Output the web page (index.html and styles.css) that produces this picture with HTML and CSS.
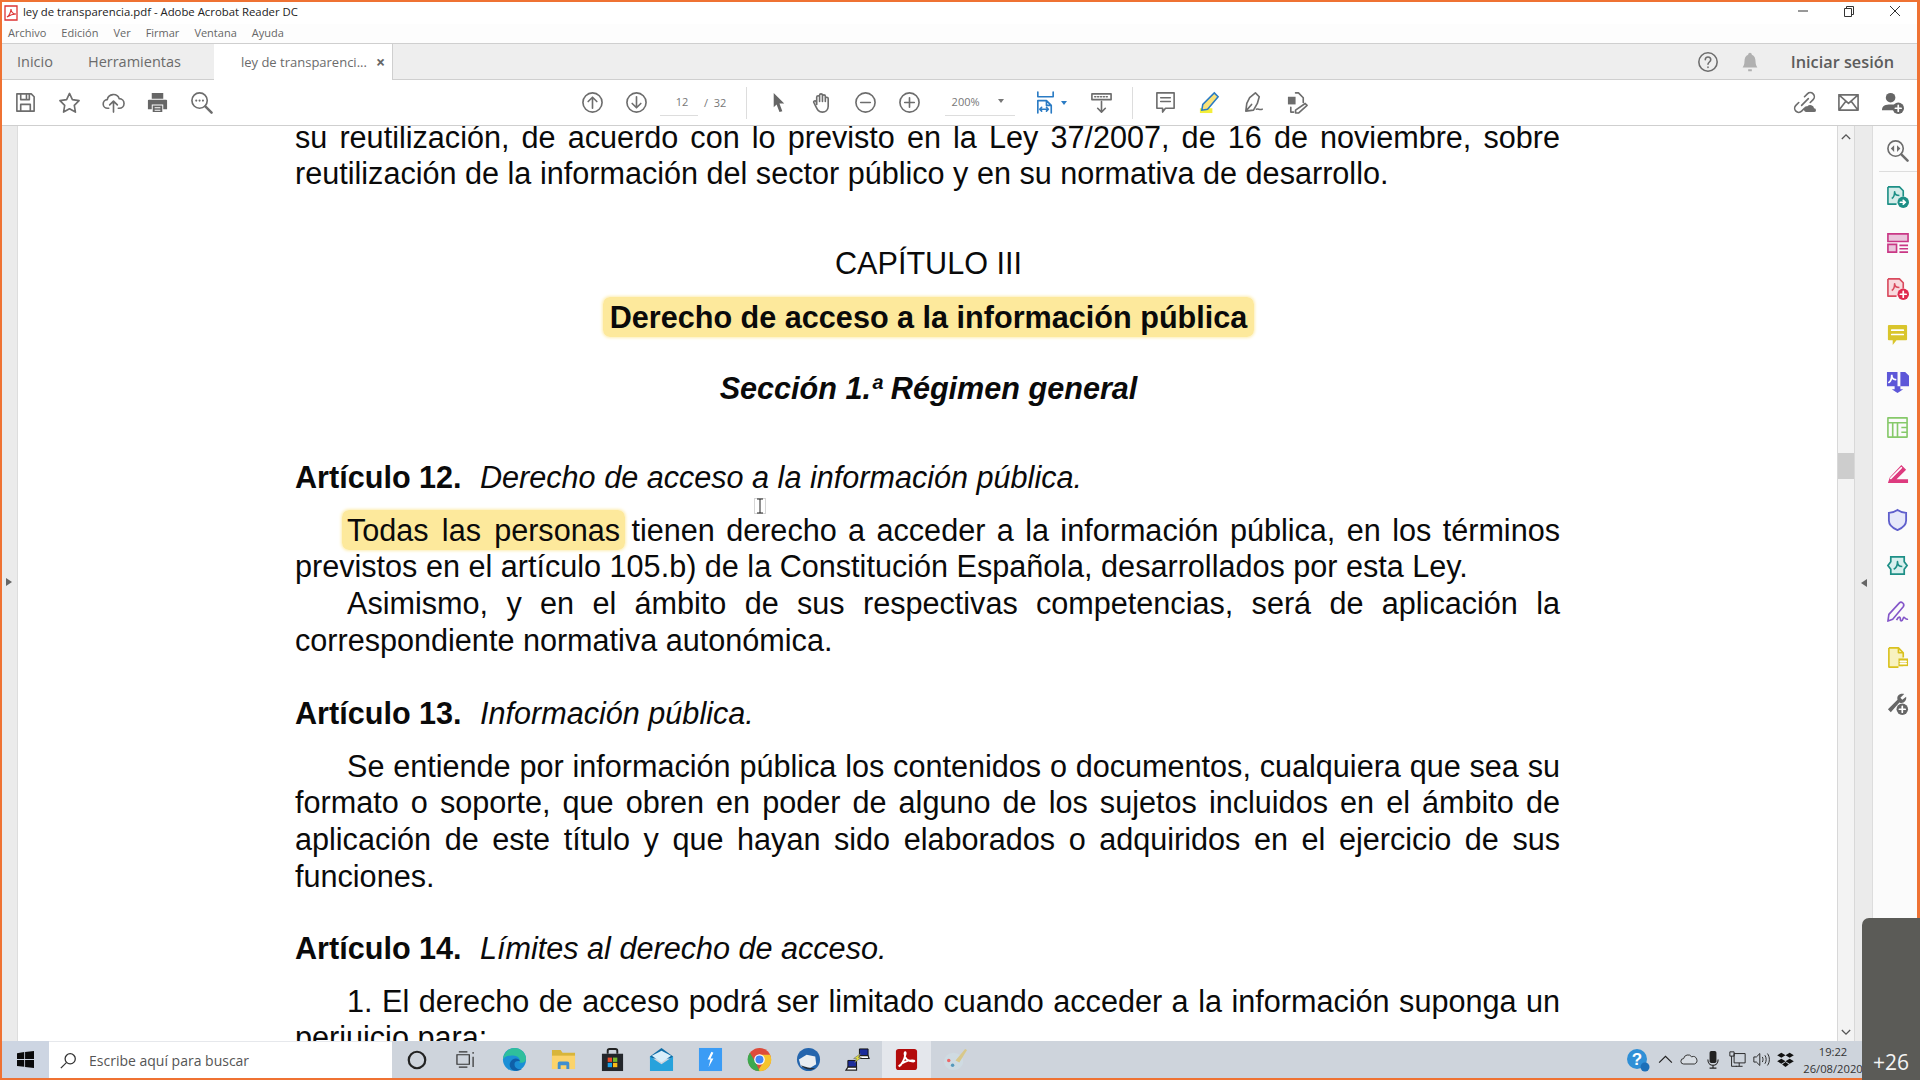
FILE: index.html
```html
<!DOCTYPE html>
<html lang="es">
<head>
<meta charset="utf-8">
<title>ley de transparencia.pdf - Adobe Acrobat Reader DC</title>
<link rel="stylesheet" href="styles.css">
</head>
<body>
<div class="screen">
  <header class="titlebar">
    <svg class="app-icon" viewBox="0 0 14 16"><path class="pdf-page" d="M1 1h12v14H1z"/><path class="pdf-mark" d="M3 12c2-1 4-5 4-8 0 3 2 5 5 5-3 0-6 1-9 3z"/></svg>
    <span class="title-text">ley de transparencia.pdf - Adobe Acrobat Reader DC</span>
    <div class="win-controls">
      <svg class="win-btn" viewBox="0 0 12 12"><path d="M1 6h10"/></svg>
      <svg class="win-btn" viewBox="0 0 12 12"><path d="M1.500 3.500h7v8h-7zM3.500 3.500v-2h7v8h-2"/></svg>
      <svg class="win-btn" viewBox="0 0 12 12"><path d="M1 1l10 10M11 1L1 11"/></svg>
    </div>
  </header>
  <nav class="menubar"><span>Archivo</span><span>Edición</span><span>Ver</span><span>Firmar</span><span>Ventana</span><span>Ayuda</span></nav>
  <div class="tabbar">
    <span class="tab-link tab-home">Inicio</span>
    <span class="tab-link tab-tools">Herramientas</span>
    <div class="tab-doc"><span>ley de transparenci...</span><b class="tab-close">×</b></div>
    <div class="tab-right">
      <svg class="ic i22" viewBox="0 0 24 24"><circle cx="12" cy="12" r="10"/><path d="M9 9.500c0-4 6-4 6 0 0 2.500-3 2.500-3 5M12 17.500v.5"/></svg>
      <svg class="ic-fill bell i22" viewBox="0 0 24 24"><path d="M12 2c1 0 2 1 2 2 3 1 4 4 4 7 0 4 1 5 2 7H4c1-2 2-3 2-7 0-3 1-6 4-7 0-1 1-2 2-2zM10 20h4v2h-4z"/></svg>
      <span class="signin">Iniciar sesión</span>
    </div>
  </div>
  <div class="toolbar">
    <div class="tool"><svg class="ic" viewBox="0 0 24 24"><path d="M3 3h15l3 3v15H3zM7 3v6h9V3M13 4.500v3M7 21v-7h10v7"/></svg></div>
    <div class="tool"><svg class="ic" viewBox="0 0 24 24"><path d="M12 2.500l3 6.500 7 1-5 5 1.200 7L12 18.500 5.800 22 7 15l-5-5 7-1z"/></svg></div>
    <div class="tool"><svg class="ic" viewBox="0 0 24 24"><path d="M7 18H6a4.500 4.500 0 0 1-.5-9A6.500 6.500 0 0 1 18 8a5 5 0 0 1 0 10h-1M12 22v-11M8 14.500l4-4 4 4"/></svg></div>
    <div class="tool"><svg class="ic-fill" viewBox="0 0 24 24"><path d="M6 2h12v6H6zM3 9h18a1 1 0 0 1 1 1v9h-4v-5H6v5H2v-9a1 1 0 0 1 1-1zM7 15h10v7H7zM9 17v1h6v-1zM9 19.500v1h6v-1z" fill-rule="evenodd"/></svg></div>
    <div class="tool"><svg class="ic" viewBox="0 0 24 24"><circle cx="10" cy="10" r="8"/><path class="thick" d="M16 16l6.500 6.500"/><path class="dots" d="M6.500 10h.01M10 10h.01M13.500 10h.01"/></svg></div>

    <div class="tool tool-first-nav"><svg class="ic" viewBox="0 0 24 24"><circle cx="12" cy="12" r="10"/><path d="M12 18V7M7.500 11L12 6.500l4.500 4.500"/></svg></div>
    <div class="tool"><svg class="ic" viewBox="0 0 24 24"><circle cx="12" cy="12" r="10"/><path d="M12 6v11M7.500 13l4.500 4.500 4.500-4.500"/></svg></div>
    <div class="page-field"><span class="page-num">12</span><span class="page-total">/ &nbsp;32</span></div>
    <div class="tool-sep sep-a"></div>
    <div class="tool tool-arrow"><svg class="ic-fill" viewBox="0 0 24 24"><path d="M7 2l11 11h-5l3 8-3 1-3-8-3 3z"/></svg></div>
    <div class="tool"><svg class="ic" viewBox="0 0 24 24"><path d="M7 14V6.500a1.500 1.500 0 0 1 3 0V11V4.500a1.500 1.500 0 0 1 3 0V11V5.500a1.500 1.500 0 0 1 3 0V11V8a1.500 1.500 0 0 1 3 0v8c0 4-3 6-6 6-4 0-5-2-7-6l-2-4c-.8-1.500 1.500-2.500 2.500-1z"/></svg></div>
    <div class="tool"><svg class="ic" viewBox="0 0 24 24"><circle cx="12" cy="12" r="10"/><path d="M7 12h10"/></svg></div>
    <div class="tool"><svg class="ic" viewBox="0 0 24 24"><circle cx="12" cy="12" r="10"/><path d="M7 12h10M12 7v10"/></svg></div>
    <div class="zoom-field"><span>200%</span><i class="caret"></i></div>
    <div class="tool tool-fit"><svg class="ic ic-blue" viewBox="0 0 24 24"><path d="M4 1v5h16V1M4 23V10h9l5 5v8M13 10v5h5M6 19h9M6 19l2-2M6 19l2 2M15 19l-2-2M15 19l-2 2"/></svg><i class="caret caret-blue"></i></div>
    <div class="tool tool-scroll"><svg class="ic" viewBox="0 0 24 24"><path d="M2 3h20v6H2zM5 6h1M8 6h1M11 6h1M14 6h1M17 6h1M12 11v11M8 18l4 4 4-4"/></svg></div>
    <div class="tool-sep sep-b"></div>
    <div class="tool"><svg class="ic" viewBox="0 0 24 24"><path d="M3 2h18v16h-9l-3 4v-4H3zM7 7h10M7 11h10"/></svg></div>
    <div class="tool"><svg viewBox="0 0 24 24"><path class="hl-mark" d="M2 18h13v5H2z"/><path class="hl-pen" d="M17 2l4 4-11 13-6 1 1-6z"/></svg></div>
    <div class="tool"><svg class="ic" viewBox="0 0 24 24"><path d="M14 2l4 4-2 7-4 7-8 1 1-8 3-6zM4 21l6-7M15 19c2-1 3 1 6 0"/></svg></div>
    <div class="tool"><svg class="ic" viewBox="0 0 24 24"><path d="M10 2h3l5 5v5M8 22H5v-5"/><path class="ic-solid" d="M2 6h8v8H2z"/><path d="M20 13l2 2-9 8-3 0 0-3z"/></svg></div>
    <div class="tool-end">
      <div class="tool"><svg class="ic" viewBox="0 0 24 24"><path d="M9 15l7-7M12 6l3-3a4 4 0 0 1 6 6l-3 3M12 18l-3 3a4 4 0 0 1-6-6l3-3"/><path class="ic-solid" d="M14 22a3 3 0 0 1 1-6 4 4 0 0 1 7 2 2 2 0 0 1 0 4z"/></svg></div>
      <div class="tool"><svg class="ic" viewBox="0 0 24 24"><path d="M2 4h20v16H2zM2 4l10 9 10-9M2 20l7-9M22 20l-7-9"/></svg></div>
      <div class="tool"><svg class="ic-fill" viewBox="0 0 24 24"><circle cx="10" cy="7" r="5"/><path d="M1 20c0-5 4-6 9-6 3 0 4 .5 5 1-2 1-3 3-2 5z"/><circle cx="18" cy="18" r="6"/><path class="plus-white" d="M15 18h6M18 15v6"/></svg></div>
    </div>
  </div>
  <div class="workspace">
    <div class="pane-left"><i class="arrow-right"></i></div>
    <main class="doc-view">
      <article class="doc">
        <div class="line just first">su reutilización, de acuerdo con lo previsto en la Ley 37/2007, de 16 de noviembre, sobre</div>
        <div class="line">reutilización de la información del sector público y en su normativa de desarrollo.</div>
        <div class="line center chapter">CAPÍTULO III</div>
        <div class="line center chapter-title"><span class="mark mark-title">Derecho de acceso a la información pública</span></div>
        <div class="line center section">Sección 1.ª Régimen general</div>
        <div class="line article article-first"><b>Artículo 12.</b><em>Derecho de acceso a la información pública.</em></div>
        <div class="line just indent"><span class="mark mark-body">Todas las personas</span> tienen derecho a acceder a la información pública, en los términos</div>
        <div class="line">previstos en el artículo 105.b) de la Constitución Española, desarrollados por esta Ley.</div>
        <div class="line just indent">Asimismo, y en el ámbito de sus respectivas competencias, será de aplicación la</div>
        <div class="line">correspondiente normativa autonómica.</div>
        <div class="line article article-mid"><b>Artículo 13.</b><em>Información pública.</em></div>
        <div class="line just indent">Se entiende por información pública los contenidos o documentos, cualquiera que sea su</div>
        <div class="line just">formato o soporte, que obren en poder de alguno de los sujetos incluidos en el ámbito de</div>
        <div class="line just">aplicación de este título y que hayan sido elaborados o adquiridos en el ejercicio de sus</div>
        <div class="line">funciones.</div>
        <div class="line article article-last"><b>Artículo 14.</b><em>Límites al derecho de acceso.</em></div>
        <div class="line just indent">1. El derecho de acceso podrá ser limitado cuando acceder a la información suponga un</div>
        <div class="line">perjuicio para:</div>
      </article>
      <svg class="ibeam" viewBox="0 0 12 16"><path d="M.5.500h11v15H.500z"/><path class="ibeam-core" d="M3 1h6M6 1v14M3 15h6"/></svg>
    </main>
    <div class="scrollbar">
      <svg class="chev chev-up" viewBox="0 0 12 8"><path d="M1 7l5-5 5 5"/></svg>
      <div class="thumb"></div>
      <svg class="chev chev-down" viewBox="0 0 12 8"><path d="M1 1l5 5 5-5"/></svg>
    </div>
    <div class="pane-collapse"><i class="arrow-left"></i></div>
    <aside class="tools-pane">
      <div class="pane-tool pane-tool-zoom"><svg class="ic" viewBox="0 0 24 24"><circle cx="10" cy="10" r="8"/><path class="thick" d="M16 16l6.500 6.500"/><path class="ic-solid" d="M8.500 6.500v7L5 10zM11.500 6.500v7L15 10z"/></svg></div>
      <div class="pane-tool"><svg viewBox="0 0 24 24"><path class="b-tealpale" d="M2 2h12l4 4v8l-7 6H2z"/><path class="l-teal" d="M2 2h12l4 4v6M2 2v18h9"/><path class="l-teal" d="M6 14c2-1 3-4 3-7 0 3 2 4 5 4"/><circle class="f-teal" cx="18" cy="18" r="6"/><path class="plus-white" d="M15 18h5M18 16l2 2-2 2"/></svg></div>
      <div class="pane-tool"><svg viewBox="0 0 24 24"><path class="b-mag" d="M2 3h21v8H2zM2 14h9v8H2z"/><path class="l-mag" d="M14 15h9M14 18.500h9M14 22h9"/></svg></div>
      <div class="pane-tool"><svg viewBox="0 0 24 24"><path class="b-redpale" d="M2 2h12l4 4v8l-7 6H2z"/><path class="l-red" d="M2 2h12l4 4v6M2 2v18h9"/><path class="l-red" d="M6 14c2-1 3-4 3-7 0 3 2 4 5 4"/><circle class="f-red" cx="18" cy="18" r="6"/><path class="plus-white" d="M15 18h6M18 15v6"/></svg></div>
      <div class="pane-tool"><svg viewBox="0 0 24 24"><path class="f-yellow" d="M3 2h18a1 1 0 0 1 1 1v14a1 1 0 0 1-1 1H11l-4 5v-5H3a1 1 0 0 1-1-1V3a1 1 0 0 1 1-1z"/><path class="plus-white" d="M6 7.500h12M6 12h12"/></svg></div>
      <div class="pane-tool"><svg viewBox="0 0 24 24"><path class="f-violet" d="M1 2h11v15H1zM15 2h5l4 4v11h-9zM9 17h6v3h3l-6 4-6-4h3z"/><path class="plus-white" d="M3 13c2-1 3-4 3-8 0 3 1 5 4 5"/></svg></div>
      <div class="pane-tool"><svg viewBox="0 0 24 24"><path class="l-green" d="M2 2h20v20H2zM2 7h20M12 7v15M7 7v15M16 12h6M16 17h6"/></svg></div>
      <div class="pane-tool"><svg viewBox="0 0 24 24"><path class="f-pink" d="M2 22l2-6L16 3l5 5-10 10h12v4z"/><path class="plus-white" d="M5 17L16 6"/></svg></div>
      <div class="pane-tool"><svg viewBox="0 0 24 24"><path class="b-indigo" d="M12 2c3 2 6 3 9 3v8c0 5-4 8-9 10-5-2-9-5-9-10V5c3 0 6-1 9-3z"/></svg></div>
      <div class="pane-tool"><svg viewBox="0 0 24 24"><path class="b-teal" d="M5 3h14v5l3 4-3 4v5H5v-5l-3-4 3-4z"/><path class="l-teal" d="M8 16c2-1 4-4 4-8 0 3 2 5 5 5"/></svg></div>
      <div class="pane-tool"><svg viewBox="0 0 24 24"><path class="l-purple" d="M2 22l1-7L14 3c2-2 6 1 4 4L7 20zM11 21c2-4 4-4 4-1s2 2 3-1 2 2 5 1"/></svg></div>
      <div class="pane-tool"><svg viewBox="0 0 24 24"><path class="b-goldpale" d="M3 2h10l5 5v15H3z"/><path class="l-gold" d="M3 2h10l5 5v5M3 2v20h10M13 2v5h5"/><path class="f-gold" d="M13 13h10v8H13z"/><path class="plus-white" d="M15 16h6M15 18.500h6"/></svg></div>
      <div class="pane-tool"><svg class="ic-fill" viewBox="0 0 24 24"><path d="M2 18L12 8c-1-4 2-7 7-6l-4 4 2 2 4-3c1 4-3 8-7 6L5 21z"/><circle cx="17" cy="18" r="6"/><path class="plus-white" d="M14 18h6M17 15v6"/></svg></div>
    </aside>
  </div>
  <footer class="taskbar">
    <div class="start"><svg class="win-logo" viewBox="0 0 20 20"><path d="M0 2.500l8.500-1.200v8H0zM9.500 1.100L20 0v9.300H9.500zM0 10.500h8.500v8L0 17.500zM9.500 10.500H20V20L9.500 18.700z"/></svg></div>
    <div class="searchbox">
      <svg class="search-ic" viewBox="0 0 20 20"><circle cx="12" cy="8" r="6"/><path d="M7.500 12.500L1 19"/></svg>
      <span>Escribe aquí para buscar</span>
    </div>
    <div class="task"><svg class="cortana" viewBox="0 0 20 20"><circle cx="10" cy="10" r="7.500"/></svg></div>
    <div class="task"><svg class="taskview" viewBox="0 0 20 20"><path d="M1 5h13v10H1zM3 2h9M3 18h9M18 2v2M18 7v11"/></svg></div>
    <div class="task"><svg viewBox="0 0 26 26"><circle class="edge-a" cx="13" cy="13" r="12"/><path class="edge-b" d="M1 13C2 5 8 1 13 1c6 0 12 5 12 11 0 4-4 5-7 4 1-2 1-6-5-7-7-1-11 2-12 4z"/><path class="edge-w" d="M11 24c-4-3-4-8 0-11 3-2 7-1 8 2-3-1-6 0-6 3 0 4 4 6 8 5-3 2-7 2-10 1z"/></svg></div>
    <div class="task"><svg viewBox="0 0 26 26"><path class="folder-a" d="M1 3h9l2 3h13v17H1z"/><path class="folder-b" d="M1 9h24v14H1z"/><path class="folder-c" d="M7 23v-6a2 2 0 0 1 2-2h8a2 2 0 0 1 2 2v6h-3v-4h-6v4z"/></svg></div>
    <div class="task"><svg viewBox="0 0 26 26"><path class="store-h" d="M8 7V4a2 2 0 0 1 2-2h6a2 2 0 0 1 2 2v3"/><path class="store-b" d="M2 7h22v18H2z"/><path class="sq-r" d="M8 11h4.500v4.500H8z"/><path class="sq-g" d="M13.500 11H18v4.500h-4.500z"/><path class="sq-b" d="M8 16.500h4.500V21H8z"/><path class="sq-y" d="M13.500 16.500H18V21h-4.500z"/></svg></div>
    <div class="task"><svg viewBox="0 0 26 26"><path class="mail-d" d="M1 10L13 1l12 9v2H1z"/><path class="mail-a" d="M1 10l12 8 12-8v15H1z"/><path class="mail-w" d="M3 9l10-5 10 5-10 7z"/></svg></div>
    <div class="task"><svg viewBox="0 0 26 26"><path class="blue-sq" d="M1 1h24v24H1z"/><path class="plus-white-fill" d="M14 5l-4 8h3l-2 8 5-9h-3l3-6z"/></svg></div>
    <div class="task"><svg viewBox="0 0 26 26"><circle class="ch-r" cx="13" cy="13" r="12"/><path class="ch-y" d="M13 8h11a12 12 0 0 1-13 17l6-9z"/><path class="ch-g" d="M13 25A12 12 0 0 1 3 6l6 10z"/><circle class="ch-w" cx="13" cy="13" r="5.500"/><circle class="ch-b" cx="13" cy="13" r="4.200"/></svg></div>
    <div class="task"><svg viewBox="0 0 26 26"><circle class="th-a" cx="13" cy="13" r="12"/><path class="th-w" d="M3 13l8-5 9 2 1 8-8 5-8-3z"/><path class="th-d" d="M5 19c3 4 10 6 15 3-5 0-10-1-15-3z"/></svg></div>
    <div class="task"><svg viewBox="0 0 26 26"><path class="pc-b" d="M15 2h9v7h-9zM3 14h9v7H3z"/><path class="pc-l" d="M12 24H1l2-3h9zM25 12H14l1-3h9z"/><path class="pc-y" d="M9 12l7-5-2 4h3l-7 5 2-4z"/></svg></div>
    <div class="task task-active"><svg viewBox="0 0 26 26"><rect class="acro-bg" x="2" y="2" width="22" height="22" rx="3"/><path class="acro-w" d="M5 20c3-1 6-7 7-13 .5-2-1-2-1 0 .2 6 4 8 9 8 2 0 1-1 0-1-6-.5-11 2-15 6z"/></svg></div>
    <div class="task"><svg viewBox="0 0 26 26"><ellipse class="pal" cx="11" cy="15" rx="10" ry="9"/><circle class="pal-r" cx="6" cy="14" r="1.800"/><circle class="pal-b" cx="10" cy="19" r="1.800"/><path class="brush" d="M13 14L23 2l2 1-8 13z"/></svg></div>
    <div class="tray">
      <div class="tray-item tray-first"><svg class="tray-help" viewBox="0 0 24 24"><circle class="help-a" cx="11" cy="11" r="10"/><text class="help-q" x="11" y="17" text-anchor="middle">?</text><circle class="help-b" cx="19" cy="19" r="4.500"/></svg></div>
      <div class="tray-item"><svg class="tray-s" viewBox="0 0 16 16"><path d="M2 11l6-6 6 6"/></svg></div>
      <div class="tray-item"><svg class="tray-s tray-cloud" viewBox="0 0 20 16"><path d="M4 13a3 3 0 0 1 0-6 5 5 0 0 1 9-2 4 4 0 0 1 3 8z"/></svg></div>
      <div class="tray-item"><svg class="tray-mic" viewBox="0 0 14 22"><rect x="3" y="1" width="8" height="14" rx="2"/><path class="mic-l" d="M1 11c0 9 12 9 12 0M7 17v4M3 21h8"/></svg></div>
      <div class="tray-item"><svg class="tray-s" viewBox="0 0 20 20"><path d="M6 3h13v11H6zM1 1h5v5H1zM3 6v12h6M12 14v4M8 18h8"/></svg></div>
      <div class="tray-item"><svg class="tray-s" viewBox="0 0 20 20"><path d="M1 7h3l4-4v14l-4-4H1zM11 7c1 2 1 4 0 6M14 5c2 3 2 7 0 10M17 3c3 4 3 10 0 14"/></svg></div>
      <div class="tray-item"><svg class="tray-drop" viewBox="0 0 20 18"><path d="M5 1l5 3-5 3-5-3zM15 1l5 3-5 3-5-3zM5 8l5 3-5 3-5-3zM15 8l5 3-5 3-5-3zM10 12l4 3-4 3-4-3z"/></svg></div>
      <div class="clock"><span>19:22</span><span>26/08/2020</span></div>
    </div>
  </footer>
</div>
<div class="overlay"><span class="overlay-count">+26</span></div>
</body>
</html>
```
FILE: styles.css
```css
* { box-sizing: border-box; }
html, body { margin: 0; height: 100%; overflow: hidden; }
body { font-family: "Open Sans", "Liberation Sans", sans-serif; color: #555; background: #ef7233; }
svg { display: block; }
.screen {
  width: 1920px; height: 1080px;
  border: solid #ef7233; border-width: 2px 3px 2px 2px;
  display: flex; flex-direction: column; background: #fff;
}

/* Title + menu */
.titlebar { height: 22px; display: flex; align-items: flex-start; background: #fff; padding: 2px 0 0 2px; flex: none; }
.app-icon { width: 14px; height: 16px; margin-top: 1px; }
.pdf-page { fill: #fff; stroke: #d33; stroke-width: 1.300; }
.pdf-mark { fill: none; stroke: #d33; stroke-width: 1.100; }
.title-text { margin-left: 5px; font-size: 11.350px; line-height: 16px; color: #222; white-space: nowrap; }
.win-controls { margin-left: auto; display: flex; margin-right: -1px; }
.win-btn { width: 12px; height: 12px; margin: 1px 17px 0 17px; fill: none; stroke: #333; stroke-width: 1; }
.menubar { height: 19px; flex: none; display: flex; align-items: flex-start; gap: 15px; padding: 1px 0 0 6px; font-size: 11px; line-height: 15px; color: #666; background: #fdfdfd; }

/* Tabs */
.tabbar { height: 37px; flex: none; display: flex; align-items: stretch; background: #eee; border-top: 1px solid #cfcfcf; border-bottom: 1px solid #cfcfcf; font-size: 14.500px; color: #6b6b6b; }
.tab-link { display: flex; align-items: center; }
.tab-home { margin-left: 15px; }
.tab-tools { margin-left: 35px; }
.tab-doc { margin-left: 33px; width: 179px; margin-bottom: -1px; background: #fff; border-right: 1px solid #cfcfcf; display: flex; align-items: center; padding-left: 27px; font-size: 13px; white-space: nowrap; }
.tab-close { margin-left: 9px; font-size: 16px; color: #666; }
.tab-right { margin-left: auto; display: flex; align-items: center; padding-right: 23px; }
.i22 { width: 22px; height: 22px; }
.ic-fill.bell { margin-left: 20px; fill: #b0b0b0; }
.signin { margin-left: 30px; font-size: 16.300px; font-weight: 600; color: #5c5c5c; }

/* Toolbar */
.ic { fill: none; stroke: #6d6d6d; stroke-width: 1.700; stroke-linejoin: round; stroke-linecap: round; }
.ic-fill { fill: #666; stroke: none; }
.ic-blue { stroke: #2a7bc4; }
.ic .thick { stroke-width: 2.600; }
.ic .dots { stroke-width: 2.200; }
.ic .ic-solid { fill: #6d6d6d; stroke: none; }
.plus-white { fill: none; stroke: #fff; stroke-width: 1.800; stroke-linecap: round; }
.plus-white-fill { fill: #fff; }
.toolbar { height: 46px; flex: none; display: flex; align-items: center; padding-left: 1px; background: #fff; border-bottom: 1px solid #cfcfcf; }
.tool { width: 44px; height: 24px; flex: none; display: flex; justify-content: center; align-items: center; }
.tool svg { width: 23px; height: 23px; }
.tool-first-nav { margin-left: 347px; }
.page-field { width: 88px; display: flex; font-size: 11px; color: #777; align-items: center; }
.page-num { width: 38px; text-align: center; padding: 4px 0 6px 6px; margin-left: 2px; border-bottom: 1px solid #ddd; }
.page-total { margin-left: 6px; }
.tool-sep { width: 1px; height: 32px; background: #ddd; flex: none; }
.sep-a { margin-right: 9px; }
.tool-arrow { margin-right: -.4px; }
.zoom-field { width: 70px; margin-left: 13px; display: flex; align-items: center; justify-content: space-between; padding: 4px 10.500px 6px 7px; font-size: 11px; color: #777; border-bottom: 1px solid #ddd; }
.caret { width: 0; height: 0; border: 3.500px solid transparent; border-top: 4px solid #777; border-bottom: 0; }
.caret-blue { border-top-color: #2a7bc4; margin-left: 4px; }
.tool-fit { margin-left: 14px; width: 44px; }
.tool-scroll { margin-left: 6.500px; }
.sep-b { margin-left: 9px; margin-right: 10.300px; }
.hl-mark { fill: #f3ee3a; }
.hl-pen { fill: #f9e27a; stroke: #2a7bc4; stroke-width: 1.600; }
.tool-end { margin-left: auto; display: flex; padding-right: 2.500px; }

/* Workspace */
.workspace { flex: 1; min-height: 0; display: flex; }
.pane-left { width: 16px; flex: none; background: #ebebeb; border-right: 1px solid #ddd; display: flex; align-items: center; justify-content: center; padding: 0 2px 4px 0; }
.arrow-right { width: 0; height: 0; border: 4.500px solid transparent; border-left: 6px solid #666; border-right: 0; }
.doc-view { flex: 1; min-width: 0; overflow: hidden; background: #fff; padding-left: 277px; position: relative; }

/* Document */
.doc { width: 1265px; font-family: "Liberation Sans", Arial, sans-serif; font-size: 30.600px; color: #0a0a0a; }
.line { line-height: 36.700px; height: 36.700px; white-space: nowrap; }
.just { white-space: normal; text-align: justify; text-align-last: justify; }
.first { margin-top: -7.350px; }
.indent { padding-left: 52px; }
.center { text-align: center; padding-left: 2px; }
.chapter { margin-top: 53px; }
.chapter-title { margin-top: 17.500px; font-weight: 700; }
.section { margin-top: 34.500px; font-weight: 700; font-style: italic; }
.article { margin-top: 36px; margin-bottom: 16px; }
.article-first { margin-top: 52px; }
.article-mid { margin-top: 36px; margin-bottom: 16.500px; }
.article-last { margin-top: 35.500px; }
.article b { display: inline-block; width: 185px; }
.mark { background: #fde99c; border-radius: 7px; padding: 3px 5px; margin: 0 -5px; box-shadow: 0 0 3px 1px #fdeeb4; }
.mark-title { padding: 3px 7px; margin: 0 -7px; }
.mark-body { word-spacing: 1.800px; }
.ibeam { position: absolute; left: 736px; top: 372px; width: 12px; height: 16px; fill: none; stroke: #777; stroke-width: .6; stroke-dasharray: 1 1; }
.ibeam .ibeam-core { stroke: #222; stroke-width: 1; stroke-dasharray: none; }

/* Scrollbar + right pane */
.scrollbar { width: 18px; flex: none; background: #f3f3f3; border-left: 1px solid #d8d8d8; border-right: 1px solid #d8d8d8; display: flex; flex-direction: column; align-items: center; }
.chev { width: 10px; height: 7px; fill: none; stroke: #555; stroke-width: 1.600; flex: none; }
.chev-up { margin-top: 7px; }
.thumb { width: 16px; height: 26px; background: #cdcdcd; margin-top: 313px; flex: none; }
.chev-down { margin-top: auto; margin-bottom: 5px; }
.pane-collapse { width: 18px; flex: none; background: #ebebeb; border-right: 1px solid #ddd; display: flex; align-items: center; justify-content: center; padding-bottom: 2px; }
.arrow-left { width: 0; height: 0; border: 4.500px solid transparent; border-right: 6px solid #666; border-left: 0; }
.tools-pane { width: 44px; flex: none; background: #fbfbfb; display: flex; flex-direction: column; align-items: center; padding: 2px 0 0 4px; }
.pane-tool { height: 46.100px; width: 100%; flex: none; display: flex; align-items: center; justify-content: center; }
.pane-tool svg { width: 23px; height: 23px; }
.pane-tool-zoom { height: 44px; position: relative; margin-bottom: 1.600px; }
.pane-tool-zoom::after { content: ""; position: absolute; left: 2px; right: 0; bottom: 0; height: 1px; background: #ddd; }
.l-teal, .l-red, .l-mag, .l-green, .l-purple, .l-gold { fill: none; stroke-width: 1.700; stroke-linejoin: round; }
.l-teal { stroke: #1d8f86; }
.f-teal { fill: #1d8f86; }
.b-tealpale { fill: #d5ece9; }
.l-red { stroke: #d94a5d; }
.f-red { fill: #e02b4f; }
.b-redpale { fill: #f8dade; }
.l-mag { stroke: #c93785; }
.b-mag { fill: #eac5dc; stroke: #c93785; stroke-width: 1.700; }
.f-yellow { fill: #d9c52c; }
.f-violet { fill: #5d57d8; }
.l-green { stroke: #86c96a; }
.f-pink { fill: #dd3a7e; }
.b-indigo { fill: #e6e8fa; stroke: #5f5fcc; stroke-width: 1.900; }
.b-teal { fill: #d8f0ee; stroke: #1d8f86; stroke-width: 1.800; }
.l-purple { stroke: #8456c9; }
.l-gold { stroke: #d9c11e; }
.b-goldpale { fill: #f8f2bf; }
.f-gold { fill: #d9c11e; }

/* Taskbar */
.taskbar { height: 37px; flex: none; display: flex; align-items: center; background: #ced4dc; }
.start { width: 47px; height: 100%; flex: none; background: #cdd5e2; display: flex; align-items: center; justify-content: center; }
.win-logo { width: 17px; height: 17px; fill: #0a0a0a; }
.searchbox { width: 343px; height: 100%; flex: none; background: #fff; display: flex; align-items: center; padding-left: 11px; font-size: 14px; color: #555; border-top: 1px solid #e6e8ec; }
.search-ic { width: 17px; height: 17px; fill: none; stroke: #333; stroke-width: 1.500; }
.searchbox span { margin-left: 12px; }
.task { width: 49px; height: 100%; flex: none; display: flex; align-items: center; justify-content: center; }
.task svg { width: 25px; height: 25px; }
.task .cortana { width: 22px; height: 22px; fill: none; stroke: #222; stroke-width: 2; }
.task .taskview { width: 19px; height: 19px; fill: none; stroke: #333; stroke-width: 1.300; }
.task-active { background: #e4e7ec; }
.edge-a { fill: #1b8fd6; }
.edge-b { fill: #2fbf9c; }
.edge-w { fill: #0f5fa8; }
.folder-a { fill: #d8b53a; }
.folder-b { fill: #fbd36b; }
.folder-c { fill: #3f8fd0; }
.store-h { fill: none; stroke: #222; stroke-width: 2; }
.store-b { fill: #23262b; }
.sq-r { fill: #ea4b2a; }
.sq-g { fill: #77ba2a; }
.sq-b { fill: #1aa2e8; }
.sq-y { fill: #f8ba15; }
.mail-a { fill: #27a2dc; }
.mail-d { fill: #0f6ea8; }
.mail-w { fill: #d9eefa; }
.blue-sq { fill: #3b9cf5; }
.ch-r { fill: #dd4b3b; }
.ch-y { fill: #f6c42c; }
.ch-g { fill: #3da94f; }
.ch-w { fill: #fff; }
.ch-b { fill: #4285f4; }
.th-a { fill: #2465ad; }
.th-w { fill: #e9eef2; }
.th-d { fill: #222e3a; }
.pc-b { fill: #1c2c9a; stroke: #111; stroke-width: 1; }
.pc-l { fill: #fff; stroke: #222; stroke-width: 1.200; }
.pc-y { fill: #e4e23a; stroke: #666; stroke-width: .6; }
.acro-bg { fill: #b30b0b; }
.acro-w { fill: none; stroke: #fff; stroke-width: 2; }
.pal { fill: #cfdbe2; }
.pal-r { fill: #e66; }
.pal-b { fill: #59b; }
.brush { fill: #d8c88a; }
.tray { margin-left: auto; display: flex; align-items: center; height: 100%; padding-right: 55px; }
.tray-item { width: 24px; height: 100%; display: flex; align-items: center; justify-content: center; }
.tray-first { margin-right: 3px; }
.tray-help { width: 24px; height: 24px; }
.help-a { fill: #2f8fd6; }
.help-q { font-family: "Liberation Sans", sans-serif; font-weight: 700; font-size: 17px; fill: #fff; }
.help-b { fill: #1c6fb8; }
.tray-s { width: 17px; height: 17px; fill: none; stroke: #222; stroke-width: 1.100; }
.tray-s.tray-cloud { fill: #d8dde3; stroke: #333; width: 18px; }
.tray-mic { width: 12px; height: 21px; fill: #222; }
.mic-l { fill: none; stroke: #222; stroke-width: 1.300; }
.tray-drop { width: 17px; height: 15px; fill: #111; }
.clock { width: 58px; margin-left: 7px; display: flex; flex-direction: column; align-items: center; font-size: 11.200px; line-height: 17px; color: #333; white-space: nowrap; }

/* Camera overlay */
.overlay { position: absolute; left: 1862px; top: 918px; width: 58px; height: 162px; background: #5b5b57; border-radius: 7px 0 0 0; display: flex; align-items: flex-end; justify-content: center; padding-bottom: 5px; }
.overlay-count { font-family: "Open Sans", sans-serif; font-size: 21px; color: #f4f4f4; line-height: 26px; }
```
